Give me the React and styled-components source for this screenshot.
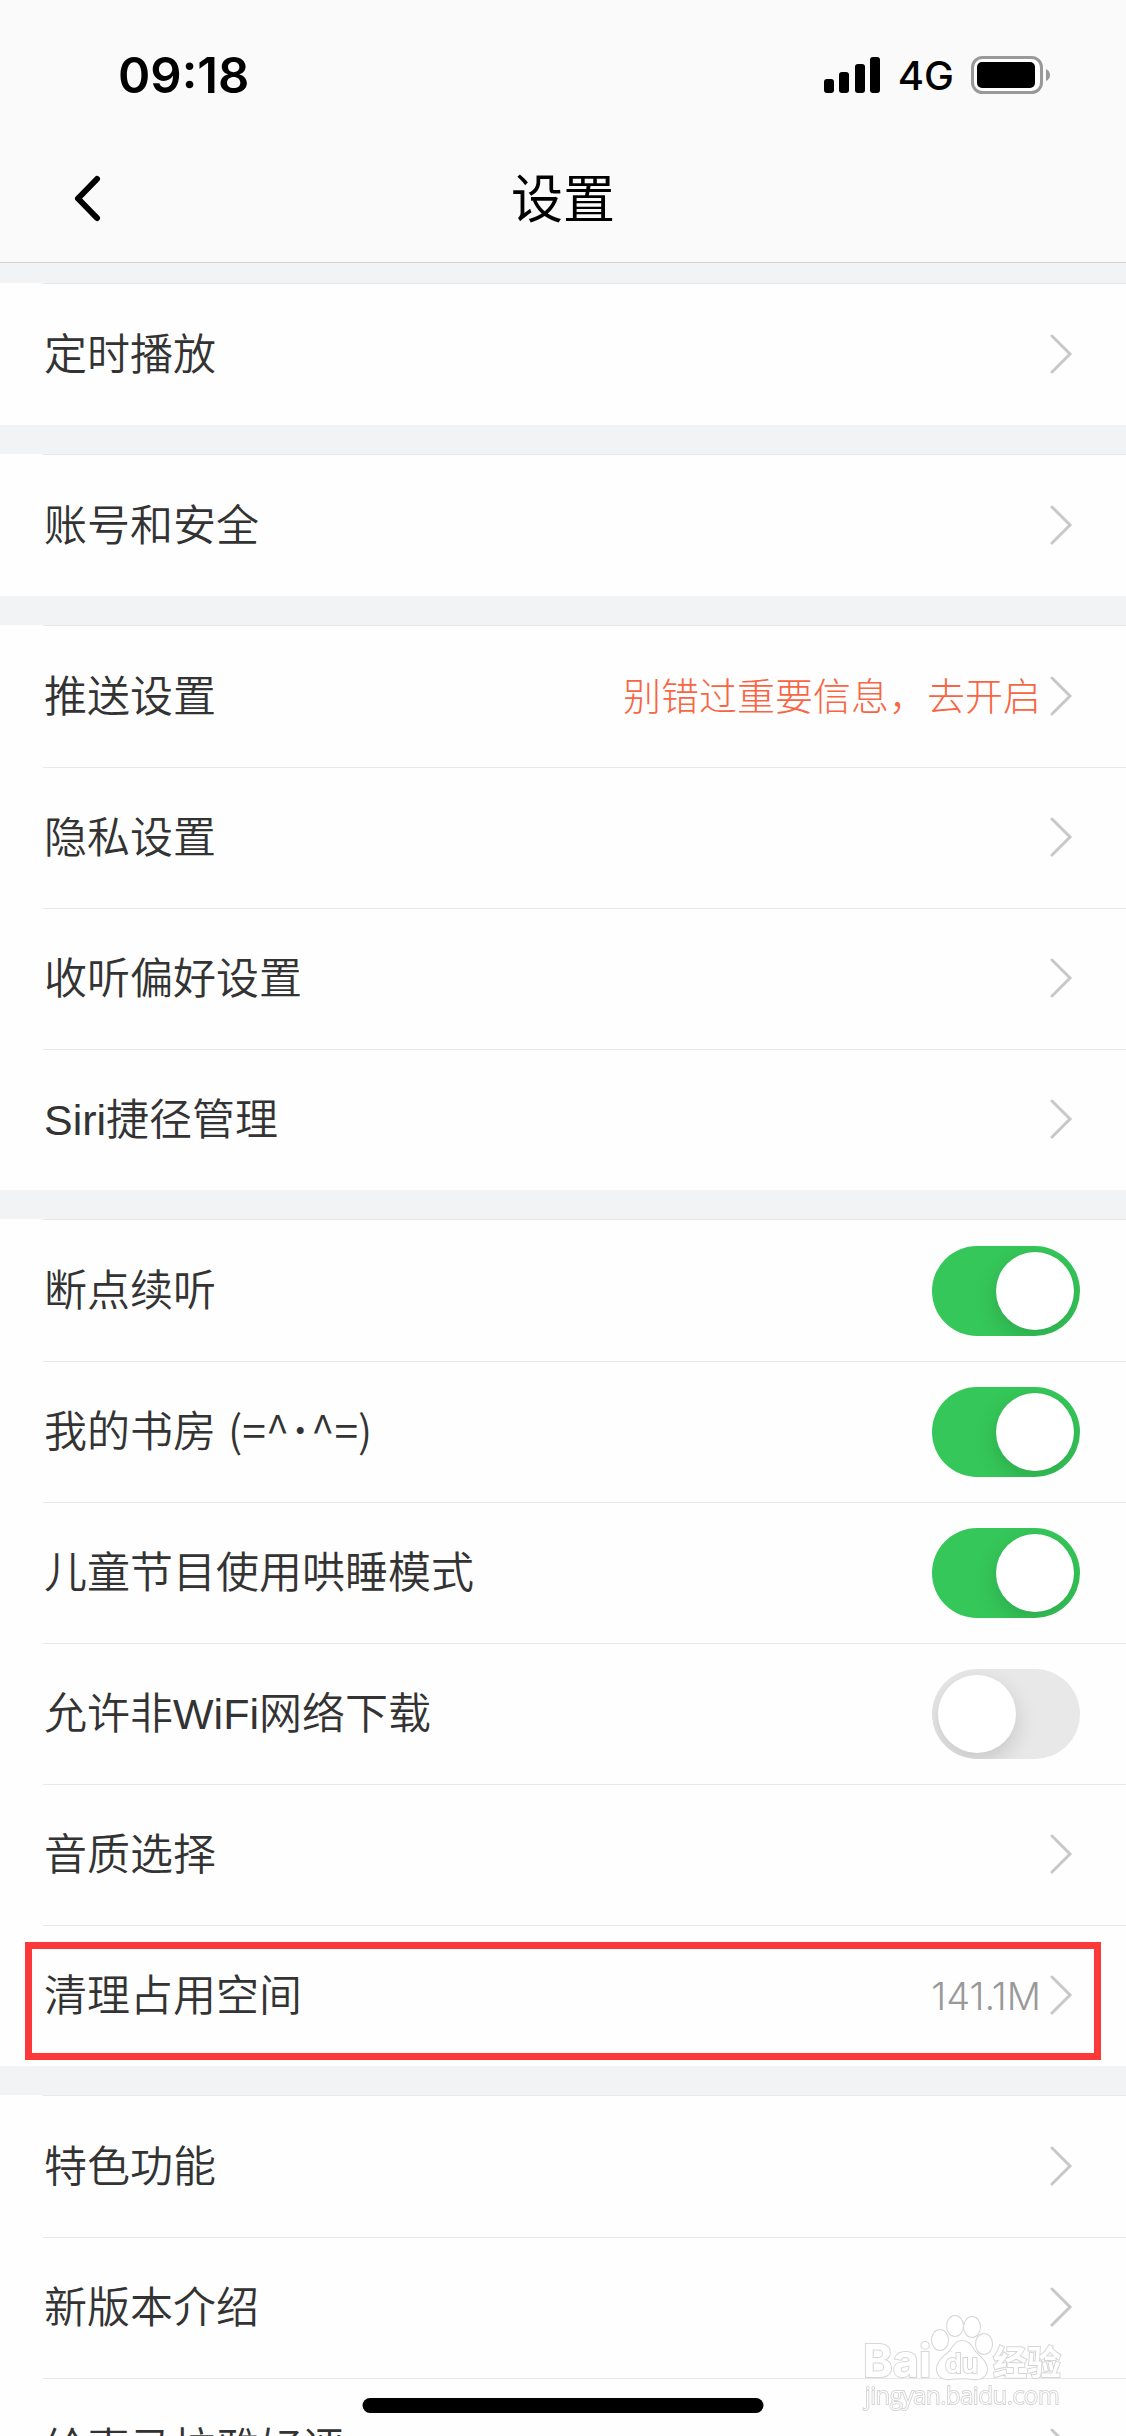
import React, { useState } from 'react';
import styled, { createGlobalStyle } from 'styled-components';

const GlobalStyle = createGlobalStyle`
  * {
    box-sizing: border-box;
  }

  body {
    margin: 0;
    background: #f2f3f5;
    font-family: 'Liberation Sans', 'Noto Sans CJK SC', sans-serif;
    font-weight: 350;
    color: #333;
  }
`;

const Screen = styled.div`
  display: flex;
  flex-direction: column;
  height: 100vh;
  overflow: hidden;
`;

const Header = styled.header`
  flex: none;
  background: #fafafa;
  border-bottom: 1px solid #cfd1d3;
`;

const StatusBar = styled.div`
  display: flex;
  align-items: center;
  justify-content: space-between;
  height: 136px;
  padding: 14px 76px 0 118px;
  font-family: Inter, sans-serif;
  color: #000;
`;

const Clock = styled.time`
  font-size: 49px;
  font-weight: 600;
`;

const StatusIcons = styled.div`
  display: flex;
  align-items: center;
  gap: 17px;
`;

const Network = styled.span`
  font-size: 40px;
  font-weight: 500;
`;

const NavBar = styled.nav`
  display: grid;
  grid-template-columns: 1fr auto 1fr;
  align-items: center;
  height: 126px;
  padding: 0 70px;
`;

const BackButton = styled.button`
  display: flex;
  justify-self: start;
  padding: 0;
  border: 0;
  background: none;
  color: #000;
  cursor: pointer;
`;

const Title = styled.h1`
  margin: 0;
  padding-top: 2px;
  font-size: 52px;
  font-weight: 400;
  line-height: 64px;
  color: #000;
`;

const Settings = styled.main`
  display: flex;
  flex: 1;
  flex-direction: column;
  gap: 29px;
  min-height: 0;
  padding-top: 20px;
  overflow-y: auto;
  scrollbar-width: none;
`;

const Section = styled.ul`
  flex: none;
  margin: 0;
  padding: 0;
  list-style: none;
  background: #fefefe;

  &::before {
    content: '';
    display: block;
    height: 1px;
    margin-left: 43px;
    background: #e6e7e9;
  }
`;

const Item = styled.li`
  position: relative;

  & + &::before {
    content: '';
    position: absolute;
    top: 0;
    left: 43px;
    right: 0;
    height: 1px;
    background: #e8e8e8;
  }
`;

const rowStyles = `
  display: flex;
  align-items: center;
  justify-content: space-between;
  height: 141px;
  font-size: 43px;
  line-height: 60px;
  color: #333;
  cursor: pointer;
`;

const LinkRow = styled.a`
  ${rowStyles}
  padding: 0 53px 0 44px;
  text-decoration: none;
`;

const SwitchRow = styled.label`
  ${rowStyles}
  padding: 0 46px 0 44px;
`;

const Label = styled.span`
  white-space: pre;
`;

const Face = styled.span`
  font-family: 'Noto Sans CJK SC', sans-serif;
  line-height: 0;
`;

const Detail = styled.span`
  display: flex;
  align-items: center;
  gap: 8px;
`;

const Value = styled.span`
  font-family: ${({ $alert }) => ($alert ? 'inherit' : 'Inter, sans-serif')};
  font-size: 38px;
  font-weight: 300;
  color: ${({ $alert }) => ($alert ? '#f96442' : '#999')};
`;

const Switch = styled.input`
  appearance: none;
  display: flex;
  width: 148px;
  height: 90px;
  margin: 0;
  padding: 6px;
  border-radius: 45px;
  background: #e8e8e8;
  overflow: hidden;
  cursor: pointer;

  &::before {
    content: '';
    width: 78px;
    height: 78px;
    border-radius: 50%;
    background: #fff;
    box-shadow: 0 8px 22px rgba(0, 0, 0, 0.15);
  }

  &:checked {
    justify-content: flex-end;
    background: #35c759;
  }
`;

const Highlight = styled.span`
  position: absolute;
  inset: 17px 25px 6px;
  border: 7px solid #fc3838;
  pointer-events: none;
`;

const HomeIndicator = styled.div`
  position: fixed;
  bottom: 23px;
  left: 50%;
  width: 401px;
  height: 15px;
  border-radius: 8px;
  background: #000;
  transform: translateX(-50%);
`;

const Watermark = styled.svg`
  position: fixed;
  right: 56px;
  bottom: 14px;
  width: 212px;
  height: 112px;
  pointer-events: none;
`;

const SignalIcon = () => (
  <svg width="57" height="36" viewBox="0 0 57 36">
    <rect x="0" y="22" width="10" height="14" rx="3" />
    <rect x="15" y="15" width="10" height="21" rx="3" />
    <rect x="31" y="7" width="10" height="29" rx="3" />
    <rect x="46" y="0" width="10" height="36" rx="3" />
  </svg>
);

const BatteryIcon = () => (
  <svg width="79" height="38" viewBox="0 0 79 38">
    <rect x="1.500" y="1.500" width="69" height="35" rx="10" fill="#fff" stroke="#999" strokeWidth="3" />
    <rect x="6" y="6" width="58" height="26" rx="5" />
    <path d="M75 13q4 2 4 6t-4 6z" fill="#999" />
  </svg>
);

const BackIcon = () => (
  <svg width="34" height="50" viewBox="0 0 34 50" fill="none" stroke="currentColor">
    <path d="M27 5 8 24.500 27 44" strokeWidth="6" strokeLinecap="round" strokeLinejoin="round" />
  </svg>
);

const Chevron = () => (
  <svg width="24" height="42" viewBox="0 0 24 42" fill="none" stroke="#c8c8c8">
    <path d="M3 2 21 20 3 38" strokeWidth="3" strokeLinecap="round" />
  </svg>
);

const sections = [
  [{ label: '定时播放' }],
  [{ label: '账号和安全' }],
  [
    { label: '推送设置', value: '别错过重要信息，去开启', alert: true },
    { label: '隐私设置' },
    { label: '收听偏好设置' },
    { label: 'Siri捷径管理' },
  ],
  [
    { label: '断点续听', toggle: true, on: true },
    { label: '我的书房 ', face: '(=^･^=)', toggle: true, on: true },
    { label: '儿童节目使用哄睡模式', toggle: true, on: true },
    { label: '允许非WiFi网络下载', toggle: true, on: false },
    { label: '音质选择' },
    { label: '清理占用空间', value: '141.1M', highlighted: true },
  ],
  [{ label: '特色功能' }, { label: '新版本介绍' }, { label: '给喜马拉雅好评' }],
];

const ToggleItem = ({ label, face, on }) => {
  const [checked, setChecked] = useState(on);

  return (
    <Item>
      <SwitchRow>
        <Label>
          {label}
          {face && <Face>{face}</Face>}
        </Label>
        <Switch
          type="checkbox"
          role="switch"
          checked={checked}
          onChange={() => setChecked(!checked)}
        />
      </SwitchRow>
    </Item>
  );
};

const LinkItem = ({ label, value, alert, highlighted }) => (
  <Item>
    <LinkRow href="#">
      <Label>{label}</Label>
      <Detail>
        {value && <Value $alert={alert}>{value}</Value>}
        <Chevron />
      </Detail>
    </LinkRow>
    {highlighted && <Highlight />}
  </Item>
);

const App = () => (
  <Screen>
    <GlobalStyle />
    <Header>
      <StatusBar>
        <Clock>09:18</Clock>
        <StatusIcons>
          <SignalIcon />
          <Network>4G</Network>
          <BatteryIcon />
        </StatusIcons>
      </StatusBar>
      <NavBar>
        <BackButton aria-label="返回">
          <BackIcon />
        </BackButton>
        <Title>设置</Title>
      </NavBar>
    </Header>
    <Settings>
      {sections.map(items => (
        <Section key={items[0].label}>
          {items.map(item =>
            item.toggle ? (
              <ToggleItem key={item.label} {...item} />
            ) : (
              <LinkItem key={item.label} {...item} />
            )
          )}
        </Section>
      ))}
    </Settings>
    <HomeIndicator />
    <Watermark
      viewBox="0 0 212 112"
      fill="#fff"
      stroke="#d6d6d6"
      strokeWidth="2"
      paintOrder="stroke"
      fontFamily="Inter, 'Noto Sans CJK SC', sans-serif"
    >
      <text x="5" y="67" fontSize="45" fontWeight="700">Bai</text>
      <ellipse cx="82" cy="30" rx="8" ry="10" />
      <ellipse cx="97" cy="16" rx="8" ry="10" />
      <ellipse cx="114" cy="17" rx="8" ry="10" />
      <ellipse cx="126" cy="34" rx="8" ry="10" />
      <path d="M104 31c6 0 9 4 12 9 5 7 13 11 13 19 0 7-6 11-13 10-8-1-16-1-24 0-7 1-13-3-13-10 0-8 7-12 13-18 4-5 6-10 12-10z" />
      <text x="87" y="63" fontSize="27" fontWeight="600">du</text>
      <text x="135" y="65" fontSize="34" fontWeight="700">经验</text>
      <text x="7" y="94" fontSize="24" fontFamily="'Open Sans', sans-serif">jingyan.baidu.com</text>
    </Watermark>
  </Screen>
);

export default App;
